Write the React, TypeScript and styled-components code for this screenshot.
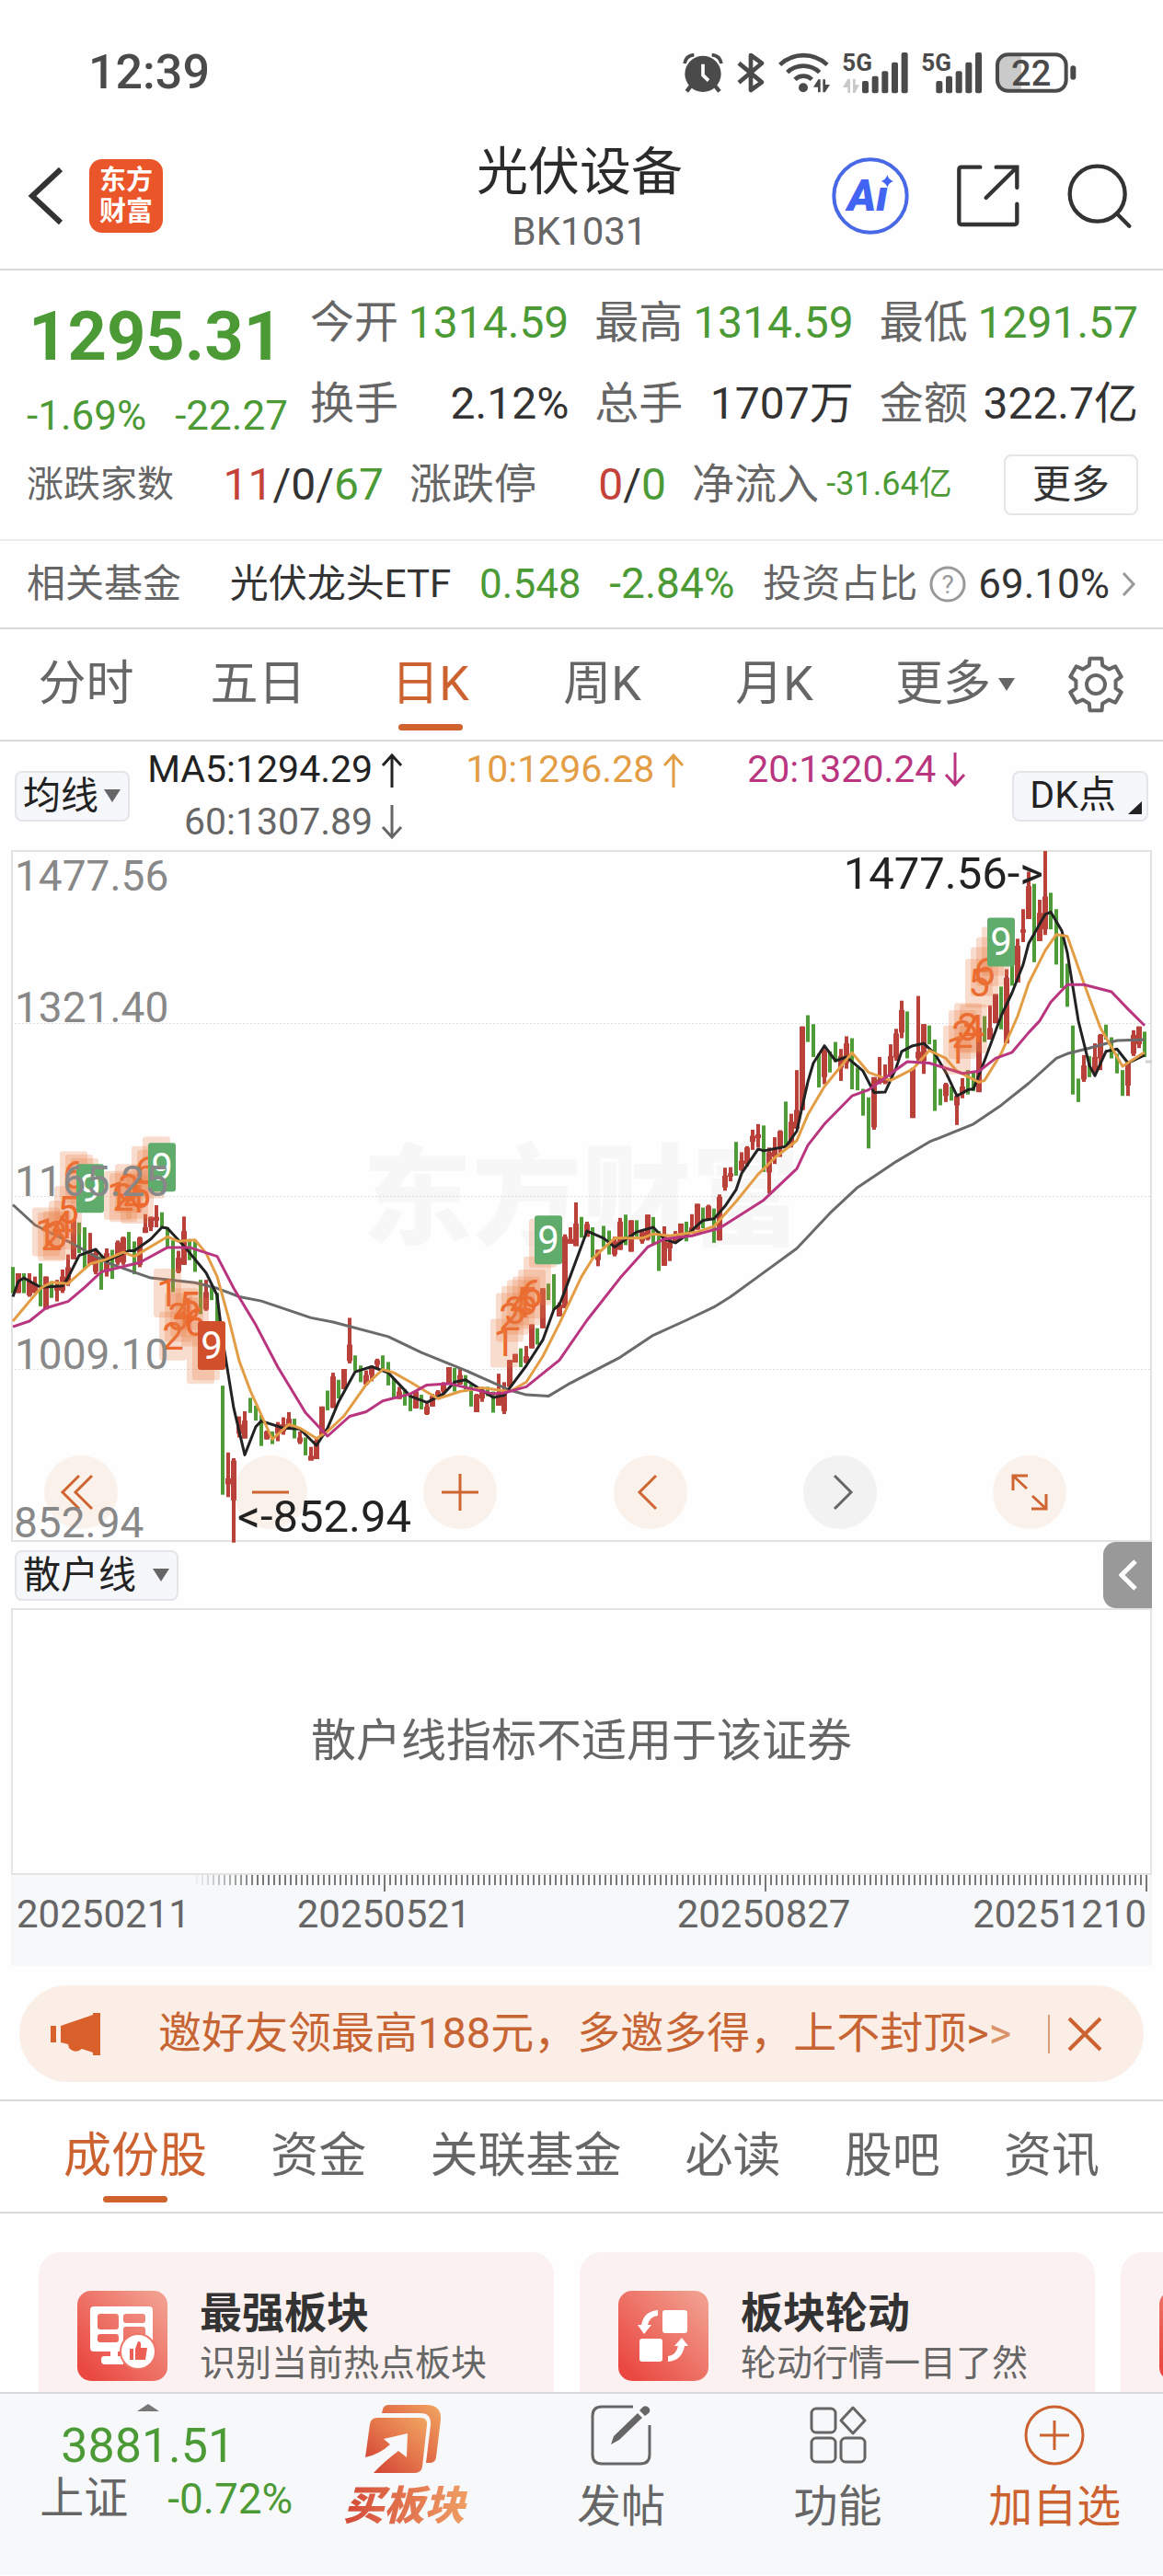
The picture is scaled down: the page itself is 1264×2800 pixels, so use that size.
import React from "react";
import styled, { createGlobalStyle, css } from "styled-components";

const color = {
  green: "#4c9a36",
  red: "#c4423a",
  text: "#333333",
  label: "#666666",
  accent: "#cc6230",
  line: "#d9d9d9",
  panel: "#f7f8fa",
};

const GlobalStyle = createGlobalStyle`
  * { box-sizing: border-box; }
  body {
    margin: 0;
    background: #fefefe;
    color: ${color.text};
    font-family: Roboto, "Noto Sans CJK SC", sans-serif;
    line-height: 1.2;
  }
  button, select {
    margin: 0;
    padding: 0;
    border: 0;
    background: none;
    color: inherit;
    font: inherit;
    cursor: pointer;
  }
  dl, dt, dd, h1, p { margin: 0; font-weight: 400; }
  a { color: inherit; text-decoration: none; }
  svg { display: block; flex: none; overflow: visible; }
`;

/* ---------- status bar ---------- */

const StatusBar = styled.div`
  display: flex;
  align-items: center;
  justify-content: space-between;
  height: 134px;
  padding: 24px 94px 0 96px;
  color: #4a4a4a;
`;

const Clock = styled.span`
  font-size: 52px;
  font-weight: 500;
  line-height: 60px;
`;

const StatusIcons = styled.div`
  display: flex;
  align-items: center;
  gap: 14px;
`;

const dark = "#4a4a4a";

const AlarmIcon = () => (
  <svg width="44" height="44" viewBox="37 56 132 132" fill="none" stroke={dark}>
    <circle cx="103" cy="126" r="59" fill={dark} stroke="none" />
    <path d="M103 94V130L121 148" stroke="#fff" strokeWidth="11" />
    <path d="M43 92Q48 66 74 64M132 64Q158 66 163 92" strokeWidth="11" />
    <path d="M63 166L50 183M143 166L157 183" strokeWidth="13" />
  </svg>
);

const BluetoothIcon = () => (
  <svg width="32" height="44" viewBox="212 54 96 132" fill="none" stroke={dark} strokeWidth="14" strokeLinejoin="round">
    <path d="M221 89L296 151L260 177V63L296 89L221 152" />
  </svg>
);

const WifiIcon = () => (
  <svg width="56" height="44" viewBox="351 50 168 132" fill="none" stroke={dark} strokeWidth="14">
    <path d="M356 90A112 112 0 0 1 510 90M380 115A76 76 0 0 1 485 115M405 138A40 40 0 0 1 460 138" />
    <circle cx="432" cy="165" r="15" fill={dark} stroke="none" />
    <path d="M465 163L481 138H488V180H480V163ZM496 138H504V155H519L503 180H496Z" fill={dark} stroke="none" />
  </svg>
);

const SignalLabel = styled.text`
  font-family: Roboto, sans-serif;
  font-size: 78px;
  font-weight: 700;
`;

const SignalIcon = ({ barStart, traffic }: { barStart: number; traffic?: boolean }) => (
  <svg width={(barStart + 152) / 3} height="46" viewBox={`0 48 ${barStart + 152} 138`} fill={dark}>
    <SignalLabel x="-2" y="110">5G</SignalLabel>
    {traffic && <path d="M0 165L16 137H24V183H16V165ZM33 137H41V157H54L40 183H33Z" fill="#c9c9c9" />}
    {[144, 128, 112, 83, 51].map((top, i) => (
      <rect key={top} x={barStart + i * 32} y={top} width="21" height={184 - top} rx="6" />
    ))}
  </svg>
);

const BatteryLabel = styled.text`
  font-family: Roboto, sans-serif;
  font-size: 114px;
  font-weight: 500;
`;

const BatteryIcon = () => (
  <svg width="88" height="44" viewBox="1058 49 264 132" fill={dark}>
    <path d="M1142 56H1100Q1064 56 1064 90V140Q1064 174 1100 174H1142Z" fill="#cacaca" />
    <rect x="1064" y="56" width="224" height="118" rx="34" fill="none" stroke={dark} strokeWidth="12" />
    <rect x="1302" y="92" width="18" height="46" rx="9" />
    <BatteryLabel x="1174" y="157" textAnchor="middle">22</BatteryLabel>
  </svg>
);

/* ---------- header ---------- */

const Header = styled.header`
  display: grid;
  grid-template-columns: 1fr auto 1fr;
  align-items: center;
  height: 160px;
  padding: 0 34px 0 30px;
  border-bottom: 2px solid ${color.line};
`;

const HeaderSide = styled.div<{ $end?: boolean }>`
  display: flex;
  align-items: center;
  gap: ${(p) => (p.$end ? 52 : 27)}px;
  justify-content: ${(p) => (p.$end ? "flex-end" : "flex-start")};
`;

const BrandLogo = styled.a`
  display: grid;
  place-content: center;
  width: 80px;
  height: 80px;
  border-radius: 14px;
  background: #ea5529;
  color: #fff;
  font-size: 29px;
  font-weight: 700;
  line-height: 34px;
`;

const TitleBlock = styled.div`
  padding-top: 10px;
  text-align: center;
`;

const Title = styled.h1`
  font-size: 56px;
  line-height: 68px;
  color: #2b2b2b;
`;

const Code = styled.p`
  font-size: 42px;
  line-height: 62px;
  color: ${color.label};
`;

const AiLabel = styled.text`
  font-family: Roboto, sans-serif;
  font-size: 142px;
  font-weight: 900;
  font-style: italic;
`;

const BackIcon = () => (
  <svg width="40" height="64" viewBox="0 0 40 64" fill="none" stroke="#333" strokeWidth="6">
    <path d="M36 3L5 32L36 61" />
  </svg>
);

const AiIcon = () => (
  <svg width="84" height="84" viewBox="521 394 252 252" fill="#4164f2">
    <circle cx="647" cy="520" r="119" fill="none" stroke="#4868e6" strokeWidth="12" />
    <AiLabel x="572" y="567">Ai</AiLabel>
    <path d="M672 446H730V492H672Z" fill="#fefefe" />
    <path d="M702 452Q707 467 722 472Q707 477 702 492Q697 477 682 472Q697 467 702 452Z" />
  </svg>
);

const ShareIcon = () => (
  <svg width="68" height="68" viewBox="926 419 204 204" fill="none" stroke="#333" strokeWidth="13" strokeLinecap="round">
    <path d="M1002 427H941Q933 427 933 435V606Q933 614 941 614H1114Q1122 614 1122 606V547" />
    <path d="M1054 427H1122V494M1118 431L1021 527" />
  </svg>
);

const SearchIcon = () => (
  <svg width="70" height="70" viewBox="1289 412 210 210" fill="none" stroke="#333" strokeWidth="13" strokeLinecap="round">
    <circle cx="1387" cy="510" r="90" />
    <path d="M1450 574L1491 615" />
  </svg>
);

/* ---------- quote ---------- */

const Quote = styled.section`
  display: grid;
  grid-template-columns: 308fr 900fr;
  padding: 13px 27px 15px 29px;
`;

const PriceBlock = styled.div`
  padding-top: 4px;
  color: ${color.green};
`;

const Price = styled.p`
  padding-left: 2px;
  font-size: 74px;
  font-weight: 700;
  line-height: 110px;
`;

const Change = styled.p`
  display: flex;
  gap: 31px;
  font-size: 44px;
  line-height: 62px;
`;

const StatGrid = styled.dl`
  display: grid;
  grid-template-columns: repeat(3, 1fr);
  column-gap: 28px;
`;

const Breadth = styled.dl`
  grid-column: 1 / -1;
  display: grid;
  grid-template-columns: 388fr 279fr 485fr;
  column-gap: 28px;
`;

const Stat = styled.div`
  display: flex;
  align-items: center;
  justify-content: space-between;
  height: 88px;
  white-space: nowrap;
`;

const StatLabel = styled.dt<{ $size?: number }>`
  font-size: ${(p) => p.$size ?? 48}px;
  color: ${color.label};
`;

type Tone = "green" | "red" | "text";

const StatValue = styled.dd<{ $tone?: Tone; $size?: number }>`
  font-size: ${(p) => p.$size ?? 48}px;
  color: ${(p) => color[p.$tone ?? "text"]};
`;

const Tint = styled.span<{ $tone: Tone; $size?: number }>`
  font-size: ${(p) => (p.$size ? `${p.$size}px` : "inherit")};
  color: ${(p) => color[p.$tone]};
`;

const MoreButton = styled.button`
  width: 146px;
  height: 66px;
  margin-left: 48px;
  border: 2px solid #e3e6e8;
  border-radius: 8px;
  font-size: 42px;
  line-height: 60px;
`;

const FundRow = styled.a`
  display: flex;
  align-items: center;
  justify-content: space-between;
  height: 98px;
  padding: 0 29px;
  border-top: 2px solid #ececec;
  border-bottom: 2px solid ${color.line};
  font-size: 42px;
  white-space: nowrap;
`;

const FundLabel = styled.span<{ $wide?: boolean }>`
  margin-right: ${(p) => (p.$wide ? 22 : 0)}px;
  color: ${color.label};
`;

const FundShare = styled.span`
  display: flex;
  align-items: center;
  gap: 13px;
  font-size: 44px;
`;

const FundShareLabel = styled(FundLabel)`
  font-size: 42px;
`;

const HelpMark = styled.text`
  font-family: Roboto, sans-serif;
  font-size: 28px;
`;

const HelpIcon = () => (
  <svg width="40" height="40" viewBox="0 0 40 40" fill="#999">
    <circle cx="20" cy="20" r="18" fill="none" stroke="#999" strokeWidth="3" />
    <HelpMark x="20" y="30" textAnchor="middle">?</HelpMark>
  </svg>
);

const ChevronRight = () => (
  <svg width="16" height="28" viewBox="0 0 16 28" fill="none" stroke="#999" strokeWidth="3">
    <path d="M2 2L13 14L2 26" />
  </svg>
);

/* ---------- tabs ---------- */

const tabMark = css`
  &::after {
    content: "";
    position: absolute;
    left: 50%;
    bottom: 10px;
    width: 70px;
    height: 7px;
    margin-left: -35px;
    border-radius: 4px;
    background: #d0622e;
  }
`;

const Tab = styled.button<{ $active?: boolean }>`
  position: relative;
  display: flex;
  align-items: center;
  justify-content: center;
  gap: 8px;
  height: 100%;
  font-size: 52px;
  white-space: nowrap;
  color: ${(p) => (p.$active ? color.accent : color.label)};
  ${(p) => p.$active && tabMark}
`;

const PeriodTabs = styled.nav`
  display: grid;
  grid-template-columns: repeat(5, 187fr) 206fr 99fr;
  height: 122px;
  padding-right: 24px;
  border-bottom: 2px solid ${color.line};
`;

const SectionTabs = styled.nav`
  display: flex;
  justify-content: space-between;
  height: 124px;
  padding: 0 69px;
  border-top: 2px solid ${color.line};
  border-bottom: 2px solid ${color.line};
`;

const Caret = () => (
  <svg width="18" height="14" viewBox="0 0 18 14" fill="#666">
    <path d="M0 0H18L9 14Z" />
  </svg>
);

const gearPath = Array.from({ length: 6 }, (_, k) => {
  const point = (deg: number, r: number) => {
    const a = ((k * 60 + deg - 90) * Math.PI) / 180;
    return `${(30 + r * Math.cos(a)).toFixed(1)} ${(30 + r * Math.sin(a)).toFixed(1)}`;
  };
  return [point(-19, 22), point(-13, 29), point(13, 29), point(19, 22)].join("L");
}).join("L");

const GearIcon = () => (
  <svg width="60" height="60" viewBox="0 0 60 60" fill="none" stroke="#666" strokeWidth="4" strokeLinejoin="round">
    <path d={`M${gearPath}Z`} />
    <circle cx="30" cy="30" r="10" />
  </svg>
);

/* ---------- chart toolbar ---------- */

const ChartToolbar = styled.div`
  display: flex;
  align-items: center;
  height: 118px;
  padding: 0 16px;
`;

const chip = css`
  display: flex;
  align-items: center;
  flex: none;
  height: 55px;
  border: 2px solid #e3e5e8;
  border-radius: 8px;
  background: #f6f7fa;
  color: #222;
  font-size: 41px;
`;

const Picker = styled.label<{ $gap: number }>`
  ${chip}
  gap: ${(p) => p.$gap}px;
  padding: 0 8px 0 7px;
`;

const PickerSelect = styled.select`
  appearance: none;
  height: 51px;
  line-height: 51px;
  outline: 0;
`;

const DkButton = styled.button`
  ${chip}
  gap: 13px;
  margin-left: 41px;
  padding: 0 5px 0 17px;
`;

const CornerMark = styled.svg`
  align-self: flex-end;
  margin-bottom: 6px;
`;

const AverageList = styled.ul`
  flex: 1;
  display: grid;
  grid-template-columns: repeat(3, 1fr);
  margin: 0;
  padding: 0;
  list-style: none;
`;

const Average = styled.li<{ $color: string }>`
  display: flex;
  align-items: center;
  justify-content: flex-end;
  gap: 9px;
  padding-right: 9px;
  font-size: 41px;
  line-height: 57px;
  white-space: nowrap;
  color: ${(p) => p.$color};
`;

const Trend = ({ up }: { up: boolean }) => (
  <svg width="24" height="38" viewBox="0 0 24 38" fill="none" stroke="currentColor" strokeWidth="3">
    <path d={up ? "M12 38V3M2 14L12 3L22 14" : "M12 0V35M2 24L12 35L22 24"} />
  </svg>
);

/* ---------- candle chart ---------- */

const ChartArea = styled.div`
  position: relative;
  margin: 0 12px;
`;

const ChartSvg = styled.svg`
  position: relative;
  width: 100%;
  height: auto;
  pointer-events: none;
`;

const AxisText = styled.text<{ $tone?: string; $size?: number }>`
  font-family: Roboto, sans-serif;
  font-size: ${(p) => p.$size ?? 46}px;
  fill: ${(p) => p.$tone ?? "#888888"};
`;

const Watermark = styled.text`
  font-family: "Noto Sans CJK SC", sans-serif;
  font-size: 119px;
  font-weight: 900;
  fill: #f7f7f7;
`;

const BadgeText = styled.text`
  font-family: Roboto, sans-serif;
  font-size: 42px;
`;

const ZoomBar = styled.div`
  position: absolute;
  left: 36px;
  right: 93px;
  bottom: 14px;
  display: flex;
  justify-content: space-between;
`;

const RoundButton = styled.button<{ $muted?: boolean }>`
  display: grid;
  place-items: center;
  width: 80px;
  height: 80px;
  border-radius: 50%;
  background: ${(p) => (p.$muted ? "#f2f2f2" : "#fbf1eb")};
  color: ${(p) => (p.$muted ? "#666" : "#cf6530")};
`;

/* One entry per trading day: direction, high, body top, body bottom, low,
   all counted downward from the top of the price range. */
const candleData = `
g 935 935 990 990,r 948 948 990 990,g 948 948 990 990,r 948 965 995 998,r 955 970 990 990,g 927 940 1018 1018,r 955 955 1025 1025,g 965 970 1000 1000,
r 962 975 985 1008,r 940 955 985 990,r 908 935 970 975,r 835 835 918 918,g 840 840 905 905,g 850 860 930 940,r 862 905 930 930,r 895 905 945 950,
g 910 915 950 983,r 895 905 945 955,g 898 900 940 960,r 878 882 925 930,r 870 872 925 930,g 860 865 890 900,g 880 890 940 950,r 870 872 930 935,
r 822 850 862 862,r 827 828 850 858,r 803 828 836 850,g 818 820 850 850,g 850 855 890 895,g 878 880 960 988,r 900 915 945 948,r 827 858 930 930,
g 875 880 910 920,g 880 885 920 945,g 962 965 1030 1035,r 962 988 1025 1028,g 975 980 1005 1005,g 990 990 1070 1070,g 1188 1188 1395 1420,r 1330 1385 1398 1425,
r 1342 1347 1432 1522,r 1253 1270 1290 1298,r 1242 1262 1300 1300,g 1214 1214 1245 1245,g 1230 1232 1255 1262,g 1250 1255 1290 1316,r 1283 1285 1302 1302,g 1285 1290 1308 1312,
r 1265 1270 1290 1306,r 1255 1270 1285 1292,r 1244 1258 1275 1280,g 1258 1260 1290 1300,r 1285 1298 1308 1312,g 1298 1300 1330 1336,r 1318 1337 1347 1347,r 1300 1305 1344 1344,
r 1232 1232 1295 1295,g 1198 1210 1235 1240,r 1160 1168 1235 1235,g 1175 1180 1210 1215,r 1152 1152 1195 1195,r 1043 1100 1135 1140,g 1123 1130 1155 1155,g 1145 1145 1175 1180,
r 1155 1165 1185 1187,r 1145 1150 1165 1178,r 1130 1133 1143 1150,g 1123 1130 1150 1152,g 1137 1140 1180 1187,g 1172 1175 1208 1215,r 1190 1200 1216 1216,g 1195 1198 1220 1230,
g 1205 1215 1238 1242,r 1198 1200 1236 1236,g 1207 1210 1232 1238,r 1222 1232 1248 1250,r 1205 1210 1232 1232,r 1197 1200 1210 1215,r 1180 1185 1200 1205,r 1148 1148 1185 1185,
g 1150 1155 1190 1200,r 1152 1165 1185 1185,g 1165 1175 1200 1200,g 1185 1190 1228 1232,r 1205 1207 1244 1244,r 1195 1200 1215 1222,g 1190 1193 1205 1210,g 1200 1203 1235 1245,
r 1162 1205 1230 1230,r 1180 1200 1242 1248,r 1133 1133 1190 1190,r 1120 1120 1138 1138,g 1108 1115 1145 1148,r 1103 1125 1138 1140,r 1057 1057 1108 1108,g 1065 1070 1095 1100,
r 980 980 1065 1065,g 970 975 1000 1005,g 950 960 1010 1025,r 1010 1015 1040 1040,r 865 870 1022 1022,r 850 875 885 885,r 797 842 890 890,g 828 840 865 872,
r 838 843 870 870,g 850 855 900 915,r 898 898 920 933,g 847 855 885 892,g 857 862 895 908,r 870 880 908 912,r 830 838 898 898,g 823 835 880 888,
r 835 835 902 902,g 835 840 865 870,r 855 860 880 885,r 823 823 875 878,g 828 835 875 885,g 858 865 910 943,r 848 870 932 932,r 875 882 895 922,
r 858 865 880 885,r 842 842 875 875,g 838 840 872 880,r 822 850 858 858,r 800 800 855 855,g 808 815 845 852,r 802 805 832 835,g 810 815 860 883,
r 780 785 878 878,r 723 740 765 772,r 722 735 742 752,g 668 690 735 740,r 690 708 728 730,r 677 680 715 720,r 642 655 668 685,r 630 652 660 680,
g 633 640 700 732,r 680 690 733 778,r 658 682 700 715,r 643 645 680 700,g 582 600 670 678,r 608 625 675 680,r 515 600 640 640,r 422 422 600 600,
g 398 400 430 455,g 417 440 480 487,g 480 485 525 552,r 470 475 530 545,g 475 480 505 520,g 455 465 495 498,r 470 485 510 538,r 443 458 500 512,
g 447 455 530 556,g 510 515 550 558,g 555 558 600 612,g 573 600 630 682,r 530 530 637 642,r 487 535 542 545,r 503 530 542 545,r 460 485 525 530,
r 427 437 488 495,r 367 387 435 447,g 390 400 470 490,r 510 512 617 617,r 357 476 490 495,r 417 417 495 523,g 420 435 455 460,g 450 500 570 602,
g 555 560 580 590,r 542 545 570 583,g 550 560 575 580,r 565 570 590 632,r 532 550 565 575,g 515 525 555 567,g 520 525 555 560,r 425 425 562 562,
g 400 430 450 455,r 377 425 450 450,r 353 353 415 415,g 337 345 400 428,r 300 318 458 458,g 290 295 325 335,r 235 250 328 328,r 172 215 222 242,
r 92 123 193 193,g 118 130 210 285,r 152 180 240 240,r 48 145 215 227,g 137 150 200 215,g 172 225 265 290,g 225 240 320 340,g 288 320 350 380,
g 420 480 560 567,g 533 535 555 583,r 483 505 535 540,g 485 487 515 530,r 458 487 515 520,r 438 440 490 515,g 418 432 445 450,g 445 460 480 490,
g 480 485 510 522,g 515 522 545 570,r 495 500 548 570,r 430 440 480 485,r 422 422 460 468,g 433 435 480 487`
  .trim()
  .split(",")
  .map((row) => {
    const [direction, ...levels] = row.trim().split(" ");
    const [high, top, bottom, low] = levels.map(Number);
    return { up: direction === "r", high, top, bottom, low };
  });

/* Moving averages as day:level pairs. */
const averageLines = [
  {
    stroke: "#6a6a6a",
    points:
      "0:802 4:845 10:880 17:925 25:958 33:968 37:980 41:998 45:1007 54:1043 58:1052 68:1083 74:1117 82:1155 90:1197 93:1207 97:1210 101:1182 110:1127 116:1080 122:1048 127:1020 130:998 135:955 142:895 148:820 153:765 160:710 166:668 174:630 179:590 184:543 189:490 191:480 195:468 200:452 205:450",
  },
  {
    stroke: "#222222",
    points:
      "0:998 1:965 2:958 5:978 9:975 10:957 12:910 15:897 17:922 21:900 22:900 25:875 27:850 28:852 31:890 35:947 37:995 38:1090 40:1235 42:1335 44:1275 45:1263 49:1278 52:1280 55:1315 57:1278 59:1222 62:1158 65:1147 68:1160 72:1210 75:1223 78:1205 80:1180 82:1175 87:1213 89:1208 93:1145 96:1090 98:1025 99:1015 100:985 104:858 107:873 109:892 113:860 116:850 118:875 120:883 122:867 125:835 127:832 129:805 131:770 132:735 135:683 136:687 140:678 142:645 144:540 145:500 147:463 149:495 151:487 154:517 156:563 158:562 160:510 161:475 163:463 165:458 167:480 169:520 171:570 173:557 174:555 176:495 179:400 181:350 183:290 184:245 187:183 188:178 190:218 191:265 193:410 195:505 196:527 198:475 200:470 202:500 205:483",
  },
  {
    stroke: "#e39d45",
    points:
      "0:1050 5:980 7:967 10:970 14:928 17:918 20:903 22:912 28:870 30:880 33:877 35:905 37:955 39:1040 41:1135 43:1198 45:1250 47:1302 50:1270 52:1278 55:1300 57:1285 60:1252 64:1185 67:1153 69:1160 72:1180 77:1215 81:1200 85:1192 90:1200 93:1180 96:1125 99:1055 103:955 105:917 109:873 114:873 116:864 119:868 124:860 127:848 131:795 135:737 138:702 142:665 144:610 147:550 152:478 155:520 159:537 163:513 166:473 169:490 171:517 175:541 176:537 179:480 182:400 184:330 187:260 189:226 191:230 194:330 197:425 201:507 205:477",
  },
  {
    stroke: "#b93580",
    points:
      "0:1062 3:1050 6:1022 10:1008 13:978 16:945 23:925 28:893 32:893 37:912 40:980 44:1058 48:1148 53:1245 57:1295 61:1253 64:1243 67:1220 72:1205 75:1186 79:1183 87:1205 89:1203 93:1190 99:1133 104:1048 110:958 115:892 118:875 123:868 128:852 136:792 142:725 144:675 147:630 152:570 155:557 162:497 166:500 172:522 175:517 178:490 181:477 184:435 186:410 188:370 191:333 194:333 199:348 202:385 205:420",
  },
];

/* Nine-turn sequences: the day of count 1 and the top level of each badge. */
const sequences = [
  { day: 6, fill: "#5fac6c", tops: [808, 818, 815, 793, 762, 688, 695, 703, 715] },
  { day: 19, fill: "#5fac6c", tops: [730, 735, 715, 738, 728, 677, 685, 657, 670] },
  { day: 28, fill: "#d14f2b", tops: [938, 1030, 990, 980, 965, 1000, 1080, 1072, 1050] },
  { day: 89, fill: "#5fac6c", tops: [1045, 990, 975, 962, 955, 940, 912, 832, 825] },
  { day: 171, fill: "#5fac6c", tops: [420, 387, 372, 375, 278, 253, 232, 210, 190] },
];

const dayX = (day: number) => 2 + day * 6;
const levelY = (level: number) => 1 + (level - 48) * 0.51;

const toPolyline = (points: string) =>
  points
    .split(" ")
    .map((pair) => {
      const [day, level] = pair.split(":").map(Number);
      return `${dayX(day)},${levelY(level).toFixed(1)}`;
    })
    .join(" ");

const priceLabels = [
  { x: 4, y: 44, text: "1477.56" },
  { x: 4, y: 187, text: "1321.40" },
  { x: 4, y: 376, text: "1165.25" },
  { x: 4, y: 564, text: "1009.10" },
  { x: 3, y: 747, text: "852.94" },
];

const CandleChart = () => (
  <ChartSvg viewBox="0 0 1240 752" role="img" aria-label="日K线图">
    <Watermark x="382" y="420">东方财富</Watermark>
    <rect x="1" y="1" width="1238" height="750" fill="none" stroke="#e2e2e2" strokeWidth="2" />
    <path d="M0 188.500H1240M0 376.500H1240M0 564.500H1240" stroke="#dddddd" strokeDasharray="2 2" />
    {candleData.map((c, day) => {
      const x = dayX(day);
      const body = c.up ? 6 : 4;
      const fill = c.up ? "#b9413a" : "#4f9b37";
      return (
        <g key={day} fill={fill}>
          <rect x={x - 2} y={levelY(c.high)} width="4" height={levelY(c.low) - levelY(c.high)} />
          <rect x={x - body / 2} y={levelY(c.top)} width={body} height={levelY(c.bottom) - levelY(c.top)} />
        </g>
      );
    })}
    <path d="M1233 230H1240" stroke="#cfcfcf" strokeWidth="3" />
    {averageLines.map((line) => (
      <polyline
        key={line.stroke}
        points={toPolyline(line.points)}
        fill="none"
        stroke={line.stroke}
        strokeWidth="3"
        strokeLinejoin="round"
      />
    ))}
    {sequences.map((s) =>
      s.tops.map((top, i) => {
        const last = i === 8;
        const x = dayX(s.day + i);
        const y = levelY(top);
        return (
          <g key={`${s.day}-${i}`}>
            <rect
              x={x - 15}
              y={y}
              width="30"
              height="53"
              rx="3"
              fill={last ? s.fill : "#e87a40"}
              fillOpacity={last ? 1 : 0.26}
            />
            {(last || i < 6) && (
              <BadgeText x={x} y={y + 41} textAnchor="middle" fill={last ? "#fff" : "#ec682c"}>
                {i + 1}
              </BadgeText>
            )}
          </g>
        );
      })
    )}
    {priceLabels.map((l) => (
      <AxisText key={l.text} x={l.x} y={l.y}>{l.text}</AxisText>
    ))}
    <AxisText x="1122" y="42" textAnchor="end" $tone="#222" $size={49}>{"1477.56->"}</AxisText>
    <AxisText x="246" y="741" $tone="#222" $size={49}>{"<-852.94"}</AxisText>
  </ChartSvg>
);

const GlyphIcon = ({ d }: { d: string }) => (
  <svg width="44" height="44" viewBox="0 0 44 44" fill="none" stroke="currentColor" strokeWidth="3">
    <path d={d} />
  </svg>
);

const zoomActions = [
  { name: "最早", d: "M20 4L2 22L20 40M34 4L16 22L34 40" },
  { name: "缩小", d: "M2 22H42" },
  { name: "放大", d: "M2 22H42M22 2V42" },
  { name: "前移", d: "M28 4L10 22L28 40" },
  { name: "后移", d: "M16 4L34 22L16 40", muted: true },
  { name: "全屏", d: "M4 20V4H20M4 4L19 18M40 24V40H24M40 40L25 26" },
];

/* ---------- sub indicator ---------- */

const IndicatorBar = styled.div`
  display: flex;
  align-items: center;
  justify-content: space-between;
  height: 72px;
  margin: 0 12px;
  padding-left: 4px;
`;

const CollapseButton = styled.button`
  display: grid;
  place-items: center;
  width: 53px;
  height: 72px;
  border-radius: 14px 0 0 14px;
  background: #999;
`;

const IndicatorPanel = styled.div`
  display: grid;
  place-items: center;
  height: 290px;
  margin: 0 12px;
  border: 2px solid #e4e4e4;
  font-size: 49px;
  color: ${color.label};
`;

const TimeAxis = styled.div`
  height: 99px;
  margin: 0 12px;
  background: ${color.panel};
`;

const Ruler = styled.svg`
  width: 100%;
  height: 18px;
`;

const Dates = styled.div`
  display: grid;
  grid-template-columns: 203fr 400fr 434fr 203fr;
  padding: 0 6px;
  font-size: 42px;
  line-height: 50px;
  color: ${color.label};
`;

const DateLabel = styled.time<{ $align?: string }>`
  text-align: ${(p) => p.$align ?? "center"};
`;

const rulerTicks = Array.from({ length: 173 }, (_, i) => 1233 - i * 6);

/* ---------- promotion ---------- */

const Promo = styled.aside`
  display: flex;
  align-items: center;
  height: 105px;
  margin: 21px 21px 19px;
  padding: 0 45px 0 34px;
  border-radius: 53px;
  background: #fbeee7;
  color: #c76433;
`;

const PromoLink = styled.a`
  flex: 1;
  padding-left: 63px;
  font-size: 47px;
  white-space: nowrap;
`;

const PromoTail = styled.span`
  color: #dc9369;
`;

const PromoClose = styled.button`
  display: grid;
  place-items: center;
  height: 42px;
  padding-left: 19px;
  border-left: 2px solid #dd9c79;
`;

/* ---------- feature cards ---------- */

const CardStrip = styled.section`
  display: flex;
  gap: 28px;
  padding: 42px 0 0 42px;
  overflow: hidden;
`;

const Card = styled.a`
  display: flex;
  flex: 0 0 560px;
  gap: 35px;
  padding: 42px 42px 0;
  border-radius: 24px 24px 0 0;
  background: #fbf1f0;
`;

const CardTitle = styled.p`
  font-size: 46px;
  font-weight: 700;
  line-height: 48px;
`;

const CardNote = styled.p`
  font-size: 39px;
  line-height: 62px;
  color: ${color.label};
  white-space: nowrap;
`;

const CardTile = ({ id, children }: { id: string; children?: React.ReactNode }) => (
  <svg width="98" height="98" viewBox="0 0 98 98">
    <defs>
      <linearGradient id={id} x1="0.100" y1="0.900" x2="0.900" y2="0.100">
        <stop offset="0" stopColor="#ea4841" />
        <stop offset="1" stopColor="#f19c8c" />
      </linearGradient>
    </defs>
    <rect width="98" height="98" rx="15" fill={`url(#${id})`} />
    {children}
  </svg>
);

const BoardGlyph = () => (
  <>
    <path
      fill="#fff"
      fillRule="evenodd"
      d="M18 17H78Q82 17 82 21V66H44V71H50V80H30Q26 80 26 76V74Q26 71 30 71H36V66H18Q14 66 14 62V21Q14 17 18 17ZM25 25Q22 25 22 28V39Q22 42 25 42H42Q45 42 45 39V28Q45 25 42 25ZM53 25Q50 25 50 28V32Q50 35 53 35H71Q74 35 74 32V28Q74 25 71 25ZM53 39Q50 39 50 42V66H74V42Q74 39 71 39ZM25 47Q22 47 22 50V53Q22 56 25 56H42Q45 56 45 53V50Q45 47 42 47Z"
    />
    <circle cx="66" cy="66" r="20" fill="#ee7466" />
    <circle cx="66" cy="66" r="18" fill="#fff" />
    <path d="M57 63H61V75H57ZM63 63L66 55Q70 54 69 62H76L74 75H63Z" fill="#ec5f55" />
  </>
);

const RotateGlyph = () => (
  <g fill="#fff">
    <rect x="48" y="21" width="27" height="25" rx="3" />
    <rect x="23" y="52" width="25" height="25" rx="3" />
    <path d="M43 21V27Q34 28 32 37H36L28 47L21 37H25Q28 22 43 21Z" />
    <path d="M54 77V71Q63 70 65 60H61L69 51L76 60H72Q69 76 54 77Z" />
  </g>
);

/* ---------- bottom bar ---------- */

const BottomBar = styled.footer`
  display: grid;
  grid-template-columns: 322fr repeat(4, 236fr);
  height: 199px;
  border-top: 2px solid ${color.line};
  background: ${color.panel};
`;

const IndexTicker = styled.a`
  display: flex;
  flex-direction: column;
  align-items: center;
  padding-top: 11px;
  color: ${color.green};
`;

const IndexValue = styled.span`
  margin-top: 8px;
  font-size: 52px;
  line-height: 60px;
`;

const IndexLine = styled.span`
  display: flex;
  align-items: center;
  gap: 43px;
  padding-left: 40px;
  font-size: 46px;
  line-height: 54px;
`;

const IndexName = styled.span`
  font-size: 48px;
  color: ${color.label};
`;

const BarButton = styled.button<{ $accent?: boolean }>`
  display: flex;
  flex-direction: column;
  align-items: center;
  padding-top: 12px;
  font-size: 48px;
  line-height: 72px;
  color: ${(p) => (p.$accent ? color.accent : color.label)};
`;

const BarIcon = styled.span`
  display: grid;
  place-items: center;
  height: 66px;
  margin-bottom: 9px;
`;

const BuyLabel = styled.span`
  margin-top: 7px;
  padding: 0 6px;
  font-size: 44px;
  font-weight: 900;
  font-style: italic;
  line-height: 56px;
  background: linear-gradient(90deg, #d24536, #f0a065);
  background-clip: text;
  -webkit-background-clip: text;
  color: transparent;
`;

const BuyIcon = () => (
  <svg width="84" height="75" viewBox="0 0 84 75">
    <defs>
      <linearGradient id="buy" x1="0" y1="1" x2="1" y2="0">
        <stop offset="0" stopColor="#d03c31" />
        <stop offset="0.550" stopColor="#e5774c" />
        <stop offset="1" stopColor="#f1a763" />
      </linearGradient>
    </defs>
    <path
      fill="url(#buy)"
      d="M18 9L19 5Q20 0 26 0H66Q83 0 82 16L77 57Q76 63 70 63H66L71 22Q72 9 60 9Z"
    />
    <path fill="url(#buy)" d="M5 21Q6 14 13 14H60Q68 14 67 22L62 67Q61 74 54 74H9Q20 62 36 50L45 57L46 31L20 37L27 43Q15 54 0 57Z" />
  </svg>
);

const PostIcon = () => (
  <svg width="66" height="66" viewBox="0 0 66 66" fill="none" stroke="#666" strokeWidth="3">
    <path d="M46 2H12Q2 2 2 12V54Q2 64 12 64H54Q64 64 64 54V22" />
    <path d="M22 43L25 34L51 9L56 14L31 38ZM53 6L57 2Q61 0 64 4Q65 7 63 9L59 12Z" fill="#666" stroke="none" />
  </svg>
);

const AppsIcon = () => (
  <svg width="62" height="62" viewBox="0 0 62 62" fill="none" stroke="#666" strokeWidth="3" strokeLinejoin="round">
    <rect x="2" y="2" width="26" height="26" rx="5" />
    <rect x="2" y="34" width="26" height="26" rx="5" />
    <rect x="34" y="34" width="26" height="26" rx="5" />
    <path d="M47 1L60 15L47 29L34 15Z" />
  </svg>
);

const AddIcon = () => (
  <svg width="66" height="66" viewBox="0 0 66 66" fill="none" stroke={color.accent} strokeWidth="3">
    <circle cx="33" cy="33" r="31" />
    <path d="M17 33H49M33 17V49" />
  </svg>
);

/* ---------- page ---------- */

const stats: { label: string; value: string; tone?: Tone }[] = [
  { label: "今开", value: "1314.59", tone: "green" },
  { label: "最高", value: "1314.59", tone: "green" },
  { label: "最低", value: "1291.57", tone: "green" },
  { label: "换手", value: "2.12%" },
  { label: "总手", value: "1707万" },
  { label: "金额", value: "322.7亿" },
];

const averages = [
  { text: "MA5:1294.29", up: true, tone: "#222222" },
  { text: "10:1296.28", up: true, tone: "#e39d45" },
  { text: "20:1320.24", up: false, tone: "#b93580" },
  { text: "60:1307.89", up: false, tone: "#666666" },
];

const periods = ["分时", "五日", "日K", "周K", "月K"];
const sections = ["成份股", "资金", "关联基金", "必读", "股吧", "资讯"];

export default function App() {
  return (
    <>
      <GlobalStyle />
      <StatusBar>
        <Clock>12:39</Clock>
        <StatusIcons>
          <AlarmIcon />
          <BluetoothIcon />
          <WifiIcon />
          <SignalIcon barStart={63} traffic />
          <SignalIcon barStart={46} />
          <BatteryIcon />
        </StatusIcons>
      </StatusBar>

      <Header>
        <HeaderSide>
          <button aria-label="返回"><BackIcon /></button>
          <BrandLogo href="#home">
            <span>东方</span>
            <span>财富</span>
          </BrandLogo>
        </HeaderSide>
        <TitleBlock>
          <Title>光伏设备</Title>
          <Code>BK1031</Code>
        </TitleBlock>
        <HeaderSide $end>
          <button aria-label="智能助手"><AiIcon /></button>
          <button aria-label="分享"><ShareIcon /></button>
          <button aria-label="搜索"><SearchIcon /></button>
        </HeaderSide>
      </Header>

      <Quote>
        <PriceBlock>
          <Price>1295.31</Price>
          <Change>
            <span>-1.69%</span>
            <span>-22.27</span>
          </Change>
        </PriceBlock>
        <StatGrid>
          {stats.map((s) => (
            <Stat key={s.label}>
              <StatLabel>{s.label}</StatLabel>
              <StatValue $tone={s.tone}>{s.value}</StatValue>
            </Stat>
          ))}
        </StatGrid>
        <Breadth>
          <Stat>
            <StatLabel $size={40}>涨跌家数</StatLabel>
            <StatValue>
              <Tint $tone="red">11</Tint>/0/<Tint $tone="green">67</Tint>
            </StatValue>
          </Stat>
          <Stat>
            <StatLabel $size={46}>涨跌停</StatLabel>
            <StatValue>
              <Tint $tone="red">0</Tint>/<Tint $tone="green">0</Tint>
            </StatValue>
          </Stat>
          <Stat>
            <StatLabel $size={46}>净流入</StatLabel>
            <StatValue $tone="green" $size={36}>-31.64亿</StatValue>
            <MoreButton>更多</MoreButton>
          </Stat>
        </Breadth>
      </Quote>

      <FundRow href="#fund">
        <FundLabel $wide>相关基金</FundLabel>
        <span>光伏龙头ETF</span>
        <Tint $tone="green" $size={44}>0.548</Tint>
        <Tint $tone="green" $size={46}>-2.84%</Tint>
        <FundShare>
          <FundShareLabel>投资占比</FundShareLabel>
          <HelpIcon />
          69.10%
          <ChevronRight />
        </FundShare>
      </FundRow>

      <PeriodTabs>
        {periods.map((p) => (
          <Tab key={p} $active={p === "日K"}>{p}</Tab>
        ))}
        <Tab>更多<Caret /></Tab>
        <Tab aria-label="设置"><GearIcon /></Tab>
      </PeriodTabs>

      <ChartToolbar>
        <Picker $gap={6}>
          <PickerSelect aria-label="主图指标"><option>均线</option></PickerSelect>
          <Caret />
        </Picker>
        <AverageList>
          {averages.map((a) => (
            <Average key={a.text} $color={a.tone}>
              {a.text}
              <Trend up={a.up} />
            </Average>
          ))}
        </AverageList>
        <DkButton>
          DK点
          <CornerMark width="15" height="14" viewBox="0 0 15 14" fill="#222">
            <path d="M15 0V14H0Z" />
          </CornerMark>
        </DkButton>
      </ChartToolbar>

      <ChartArea>
        <ZoomBar>
          {zoomActions.map((a) => (
            <RoundButton key={a.name} aria-label={a.name} $muted={a.muted}>
              <GlyphIcon d={a.d} />
            </RoundButton>
          ))}
        </ZoomBar>
        <CandleChart />
      </ChartArea>

      <IndicatorBar>
        <Picker $gap={18}>
          <PickerSelect aria-label="副图指标"><option>散户线</option></PickerSelect>
          <Caret />
        </Picker>
        <CollapseButton aria-label="展开侧栏">
          <svg width="20" height="34" viewBox="0 0 20 34" fill="none" stroke="#fff" strokeWidth="5">
            <path d="M18 2L3 17L18 32" />
          </svg>
        </CollapseButton>
      </IndicatorBar>
      <IndicatorPanel>散户线指标不适用于该证券</IndicatorPanel>
      <TimeAxis>
        <Ruler viewBox="0 0 1240 18" preserveAspectRatio="none">
          {rulerTicks.map((x, i) => (
            <rect
              key={x}
              x={x}
              y="0"
              width="2"
              height={i === 0 || i === 69 || i === 138 ? 18 : 11}
              fill="#777"
              fillOpacity={Math.min(1, (173 - i) / 12)}
            />
          ))}
        </Ruler>
        <Dates>
          <DateLabel $align="left">20250211</DateLabel>
          <DateLabel>20250521</DateLabel>
          <DateLabel>20250827</DateLabel>
          <DateLabel $align="right">20251210</DateLabel>
        </Dates>
      </TimeAxis>

      <Promo>
        <svg width="54" height="46" viewBox="0 0 54 46" fill="#d9602a">
          <path d="M0 14H6V32H0ZM11 14L46 2V0H54V46H46V43L34 39Q27 45 20 38L19 34L11 32Z" />
        </svg>
        <PromoLink href="#invite">
          邀好友领最高188元，多邀多得，上不封顶{">"}<PromoTail>{">"}</PromoTail>
        </PromoLink>
        <PromoClose aria-label="关闭">
          <svg width="38" height="38" viewBox="0 0 38 38" fill="none" stroke="#cc6230" strokeWidth="4">
            <path d="M2 2L36 36M36 2L2 36" />
          </svg>
        </PromoClose>
      </Promo>

      <SectionTabs>
        {sections.map((s, i) => (
          <Tab key={s} $active={i === 0}>{s}</Tab>
        ))}
      </SectionTabs>

      <CardStrip>
        <Card href="#strongest">
          <CardTile id="tile-a"><BoardGlyph /></CardTile>
          <div>
            <CardTitle>最强板块</CardTitle>
            <CardNote>识别当前热点板块</CardNote>
          </div>
        </Card>
        <Card href="#rotation">
          <CardTile id="tile-b"><RotateGlyph /></CardTile>
          <div>
            <CardTitle>板块轮动</CardTitle>
            <CardNote>轮动行情一目了然</CardNote>
          </div>
        </Card>
        <Card href="#next" aria-label="下一项">
          <CardTile id="tile-c" />
        </Card>
      </CardStrip>

      <BottomBar>
        <IndexTicker href="#index">
          <svg width="24" height="8" viewBox="0 0 24 8" fill="#777">
            <path d="M0 8L12 0L24 8Z" />
          </svg>
          <IndexValue>3881.51</IndexValue>
          <IndexLine>
            <IndexName>上证</IndexName>
            -0.72%
          </IndexLine>
        </IndexTicker>
        <BarButton>
          <BuyIcon />
          <BuyLabel>买板块</BuyLabel>
        </BarButton>
        <BarButton>
          <BarIcon><PostIcon /></BarIcon>
          发帖
        </BarButton>
        <BarButton>
          <BarIcon><AppsIcon /></BarIcon>
          功能
        </BarButton>
        <BarButton $accent>
          <BarIcon><AddIcon /></BarIcon>
          加自选
        </BarButton>
      </BottomBar>
    </>
  );
}
